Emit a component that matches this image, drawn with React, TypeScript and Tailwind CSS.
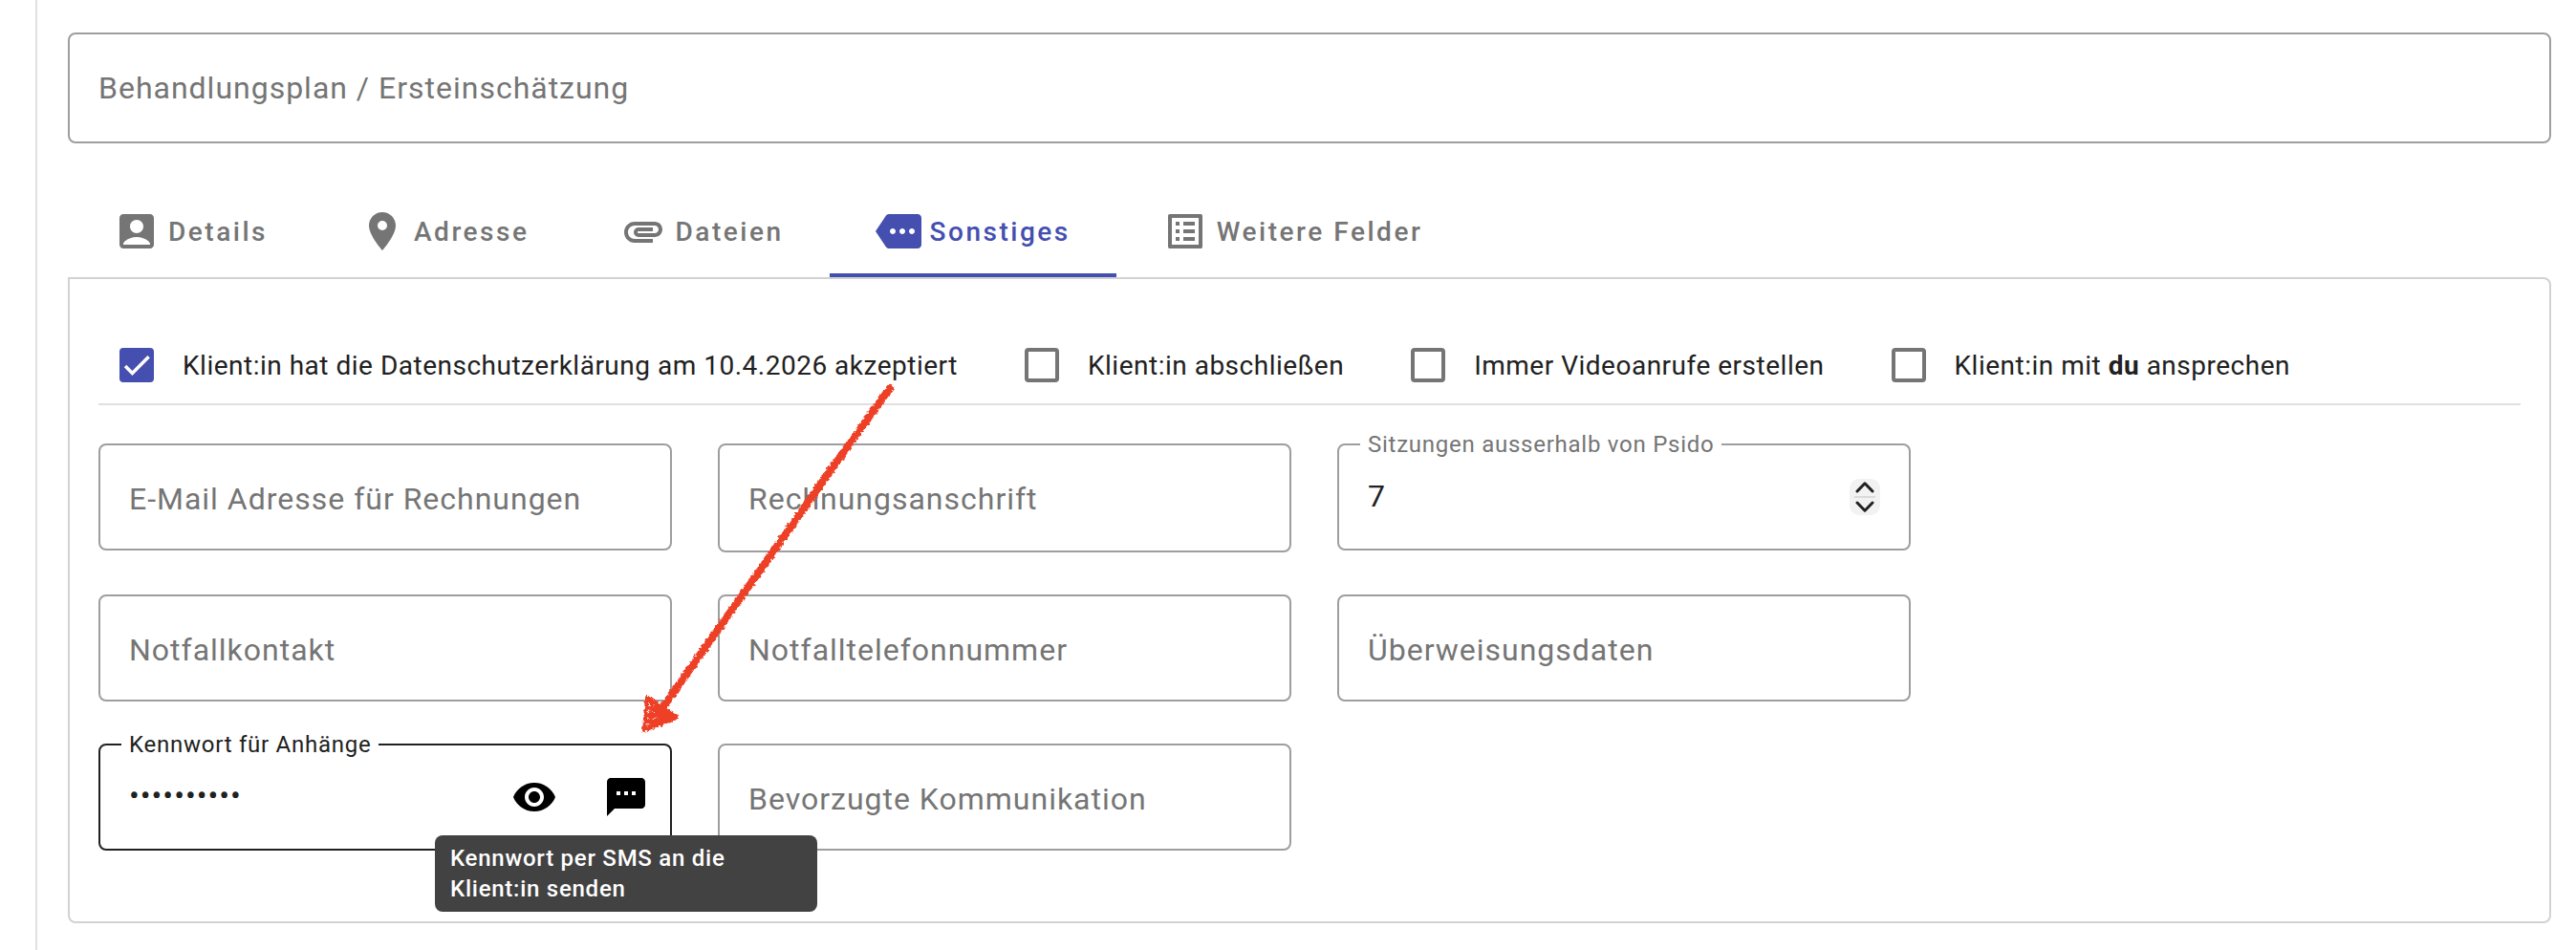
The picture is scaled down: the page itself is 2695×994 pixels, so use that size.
import { useState } from "react"
import type { ReactNode } from "react"
import type { IconType } from "react-icons"
import { MdAccountBox, MdAttachment, MdListAlt, MdMore, MdPlace, MdSms, MdVisibility } from "react-icons/md"

interface Tab {
  key: string
  icon: IconType
}

const TABS: Tab[] = [
  { key: "Details", icon: MdAccountBox },
  { key: "Adresse", icon: MdPlace },
  { key: "Dateien", icon: MdAttachment },
  { key: "Sonstiges", icon: MdMore },
  { key: "Weitere Felder", icon: MdListAlt },
]

interface Option {
  id: string
  label: ReactNode
  checked: boolean
}

const OPTIONS: Option[] = [
  { id: "datenschutz", label: "Klient:in hat die Datenschutzerklärung am 10.4.2026 akzeptiert", checked: true },
  { id: "abschliessen", label: "Klient:in abschließen", checked: false },
  { id: "video", label: "Immer Videoanrufe erstellen", checked: false },
  { id: "du", label: <>Klient:in mit <b className="font-bold">du</b> ansprechen</>, checked: false },
]

const FIELD =
  "block w-full rounded-lg border-2 border-[#9e9e9e] bg-transparent px-[30px] text-[32px] leading-10 tracking-[0.031em] text-[#212121] placeholder:text-[#757575] placeholder:opacity-100 outline-none"

function Checkbox({ id, label, checked }: Option) {
  return (
    <div className="flex items-center">
      <span className="relative m-[22px] grid size-9">
        <input
          id={id}
          type="checkbox"
          defaultChecked={checked}
          className="peer size-9 appearance-none rounded-sm border-4 border-[#757575] bg-white checked:border-[#444fb0] checked:bg-[#444fb0]"
        />
        <svg viewBox="0 0 24 24" className="pointer-events-none absolute inset-1 hidden size-7 peer-checked:block" fill="none" stroke="white" strokeWidth="3">
          <path d="M1.73 12.91 8.1 19.28 22.79 4.59" />
        </svg>
      </span>
      <label htmlFor={id} className="pt-0.5 pl-2 text-[28px] leading-10 tracking-[0.018em] text-[#212121]">{label}</label>
    </div>
  )
}

function TextField({ label }: { label: string }) {
  return <input type="text" aria-label={label} placeholder={label} className={`${FIELD} h-28 pt-[3px]`} />
}

function TextArea({ label, className }: { label: string; className: string }) {
  return <textarea rows={1} aria-label={label} placeholder={label} className={`${FIELD} resize-none py-9 ${className}`} />
}

function FloatingLabel({ htmlFor, className, children }: { htmlFor: string; className: string; children: ReactNode }) {
  return (
    <label htmlFor={htmlFor} className={`absolute left-6 -top-[15px] bg-white px-2 text-2xl leading-8 tracking-[0.031em] ${className}`}>
      {children}
    </label>
  )
}

function SessionsField() {
  const [count, setCount] = useState(7)
  return (
    <div className="relative">
      <input
        id="sitzungen"
        type="number"
        value={count}
        onChange={(e) => setCount(Number(e.target.value))}
        className={`${FIELD} h-28 pb-0.5 [appearance:textfield] [&::-webkit-inner-spin-button]:appearance-none`}
      />
      <FloatingLabel htmlFor="sitzungen" className="text-[#757575]">Sitzungen ausserhalb von Psido</FloatingLabel>
      {/* Stepper */}
      <div className="absolute inset-y-0 right-8 flex items-center">
        <div className="flex w-8 flex-col items-center rounded-[10px] bg-[#f2f2f2]">
          <button aria-label="Mehr" onClick={() => setCount(count + 1)} className="flex h-[18px] items-center">
            <svg width="20" height="12" viewBox="0 0 20 12" fill="none" stroke="#212121" strokeWidth="3" strokeLinecap="round" strokeLinejoin="round">
              <path d="M2 10 10 1.8 18 10" />
            </svg>
          </button>
          <span className="h-0.5 w-[22px] bg-[#dadada]" />
          <button aria-label="Weniger" onClick={() => setCount(count - 1)} className="flex h-[18px] items-center">
            <svg width="20" height="12" viewBox="0 0 20 12" fill="none" stroke="#212121" strokeWidth="3" strokeLinecap="round" strokeLinejoin="round">
              <path d="M2 2 10 10.2 18 2" />
            </svg>
          </button>
        </div>
      </div>
    </div>
  )
}

function PasswordField() {
  const [visible, setVisible] = useState(false)
  return (
    <div className="relative z-10">
      <div className="flex h-28 items-center rounded-lg border-2 border-[#212121] pl-[30px]">
        <input
          id="kennwort"
          type={visible ? "text" : "password"}
          defaultValue="geheim1234"
          className="min-w-0 flex-1 bg-transparent pb-1 text-[32px] leading-10 tracking-[0.031em] text-[#212121] outline-none"
        />
        <button aria-label="Kennwort anzeigen" onClick={() => setVisible(!visible)} className="px-6 text-black">
          <MdVisibility size={48} />
        </button>
        <button aria-describedby="sms-tip" aria-label="SMS senden" className="relative -mr-0.5 px-6 text-black">
          <MdSms size={48} />
          <span
            id="sms-tip"
            role="tooltip"
            className="absolute left-1/2 top-full mt-4 w-[400px] -translate-x-1/2 rounded-lg bg-[#424242] px-4 py-2 text-left text-2xl leading-8 font-medium tracking-[0.031em] text-white"
          >
            Kennwort per SMS an die Klient:in senden
          </span>
        </button>
      </div>
      <FloatingLabel htmlFor="kennwort" className="text-[#212121]">Kennwort für Anhänge</FloatingLabel>
    </div>
  )
}

// Crayon-style arrow pointing at the SMS button
function HintArrow() {
  return (
    <svg className="pointer-events-none absolute left-[587px] top-[103px] z-20" width="285" height="385" viewBox="660 395 285 385" fill="none" stroke="#ed4127" aria-hidden="true">
      <filter id="crayon" filterUnits="userSpaceOnUse" x="660" y="395" width="285" height="385">
        <feTurbulence type="fractalNoise" baseFrequency="0.35" numOctaves="2" seed="4" />
        <feDisplacementMap in="SourceGraphic" scale="5" xChannelSelector="R" yChannelSelector="G" />
      </filter>
      <g filter="url(#crayon)" strokeLinecap="round" strokeLinejoin="round">
        <path d="M931 406 866 496 800 590 738 677 691 744" strokeWidth="8" />
        <path d="M677 730 674 764 708 751 695 741Z" strokeWidth="4" />
        <path d="M677 730 698 744 677 740 707 749 676 748 704 752 676 755 693 757 675 762M682 734 680 760M687 738 685 758M692 739 690 756M697 740 696 755M702 745 701 753" strokeWidth="4" />
      </g>
    </svg>
  )
}

export default function App() {
  const [active, setActive] = useState("Sonstiges")

  return (
    <div className="min-h-screen bg-white pl-[37px] font-[Roboto,sans-serif] text-[#212121]">
      <div className="min-h-screen border-l-2 border-[#e0e0e0] pt-[34px] pr-[26px] pb-7 pl-8">
        <TextArea label="Behandlungsplan / Ersteinschätzung" className="h-[116px]" />

        {/* Tabs */}
        <div role="tablist" className="mt-11 flex">
          {TABS.map((t) => {
            const Icon = t.icon
            const isActive = active === t.key
            return (
              <button
                key={t.key}
                role="tab"
                aria-selected={isActive}
                onClick={() => setActive(t.key)}
                className={`flex h-24 items-center gap-[9px] border-b-4 px-12 pt-1 text-[28px] font-medium tracking-[0.09em] whitespace-nowrap ${
                  isActive ? "border-[#444fb0] text-[#444fb0]" : "border-transparent text-[#757575]"
                }`}
              >
                <Icon size={48} className="shrink-0" />
                <span className="pt-0.5">{t.key}</span>
              </button>
            )
          })}
        </div>

        <div role="tabpanel" className="relative rounded-lg rounded-tl-none border-2 border-[#d2d2d2] px-[30px] pt-[50px] pb-[74px]">
          <div className="flex flex-wrap gap-x-12 border-b-2 border-[#e0e0e0]">
            {OPTIONS.map((o) => (
              <Checkbox key={o.id} {...o} />
            ))}
          </div>

          <div className="mt-10 grid max-w-[1896px] grid-cols-3 items-start gap-x-12 gap-y-11">
            <TextField label="E-Mail Adresse für Rechnungen" />
            <TextArea label="Rechnungsanschrift" className="h-[114px]" />
            <SessionsField />
            <TextField label="Notfallkontakt" />
            <TextField label="Notfalltelefonnummer" />
            <TextField label="Überweisungsdaten" />
            <PasswordField />
            <TextField label="Bevorzugte Kommunikation" />
          </div>

          <HintArrow />
        </div>
      </div>
    </div>
  )
}
